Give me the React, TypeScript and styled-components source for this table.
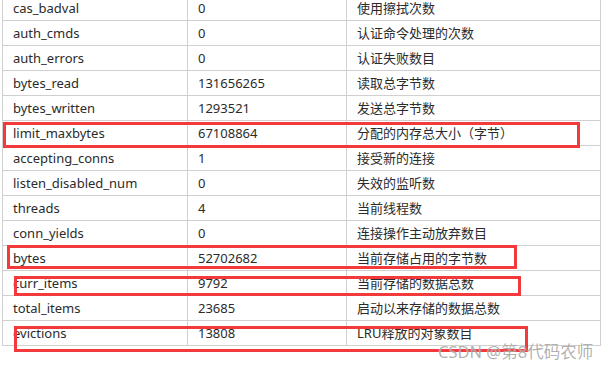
import styled, { createGlobalStyle } from "styled-components";

const GlobalStyle = createGlobalStyle`
  html, body {
    margin: 0;
    padding: 0;
    background: #ffffff;
  }
  body {
    font-family: "Noto Sans", "Noto Sans CJK SC", sans-serif;
    overflow: hidden;
  }
`;

type Row = { name: string; value: string; desc: string };

const rows: Row[] = [
  { name: "cas_badval", value: "0", desc: "使用擦拭次数" },
  { name: "auth_cmds", value: "0", desc: "认证命令处理的次数" },
  { name: "auth_errors", value: "0", desc: "认证失败数目" },
  { name: "bytes_read", value: "131656265", desc: "读取总字节数" },
  { name: "bytes_written", value: "1293521", desc: "发送总字节数" },
  { name: "limit_maxbytes", value: "67108864", desc: "分配的内存总大小（字节）" },
  { name: "accepting_conns", value: "1", desc: "接受新的连接" },
  { name: "listen_disabled_num", value: "0", desc: "失效的监听数" },
  { name: "threads", value: "4", desc: "当前线程数" },
  { name: "conn_yields", value: "0", desc: "连接操作主动放弃数目" },
  { name: "bytes", value: "52702682", desc: "当前存储占用的字节数" },
  { name: "curr_items", value: "9792", desc: "当前存储的数据总数" },
  { name: "total_items", value: "23685", desc: "启动以来存储的数据总数" },
  { name: "evictions", value: "13808", desc: "LRU释放的对象数目" },
];

// hand-drawn red marks laid over the screenshot
type MarkBox = { x: number; y: number; w: number; h: number };
const marks: MarkBox[] = [
  { x: 3, y: 122, w: 577, h: 26 },
  { x: 7, y: 245, w: 510, h: 24 },
  { x: 14, y: 276, w: 507, h: 20 },
  { x: 14, y: 326, w: 514, h: 26 },
];

const App: React.FC = () => {
  return (
    <>
      <GlobalStyle />
      <Page>
        <Table>
          <colgroup>
            <Col $width={185} />
            <Col $width={159} />
            <Col $width={254} />
          </colgroup>
          <tbody>
            {rows.map((r) => (
              <tr key={r.name}>
                <Cell>{r.name}</Cell>
                <Cell>{r.value}</Cell>
                <Cell>{r.desc}</Cell>
              </tr>
            ))}
          </tbody>
        </Table>
        {marks.map((m, i) => (
          <Mark key={i} $x={m.x} $y={m.y} $w={m.w} $h={m.h} />
        ))}
        <Watermark>CSDN @第8代码农师</Watermark>
      </Page>
    </>
  );
};

export default App;

const Page = styled.div`
  position: relative;
  width: 611px;
  height: 369px;
  overflow: hidden;
  background: #fff;
`;

const Table = styled.table`
  border-collapse: collapse;
  table-layout: fixed;
  width: 599px;
  margin: -5px 0 0 2px;
  color: #2b2b2b;
  font-size: 13px;
`;

const Col = styled.col<{ $width: number }>`
  width: ${({ $width }) => $width}px;
`;

const Cell = styled.td`
  border: 1px solid #d0d0d0;
  height: 24px;
  padding: 0 0 0 10px;
  box-sizing: border-box;
  line-height: 24px;
  white-space: nowrap;
`;

const Mark = styled.div<{ $x: number; $y: number; $w: number; $h: number }>`
  position: absolute;
  left: ${({ $x }) => $x}px;
  top: ${({ $y }) => $y}px;
  width: ${({ $w }) => $w}px;
  height: ${({ $h }) => $h}px;
  box-sizing: border-box;
  border: 3px solid #f23a3c;
`;

const Watermark = styled.div`
  position: absolute;
  left: 438px;
  top: 341px;
  font-size: 16.5px;
  line-height: 21px;
  color: rgba(110, 110, 110, 0.55);
  text-shadow: 0 0 1px rgba(255, 255, 255, 0.9);
  white-space: nowrap;
`;
